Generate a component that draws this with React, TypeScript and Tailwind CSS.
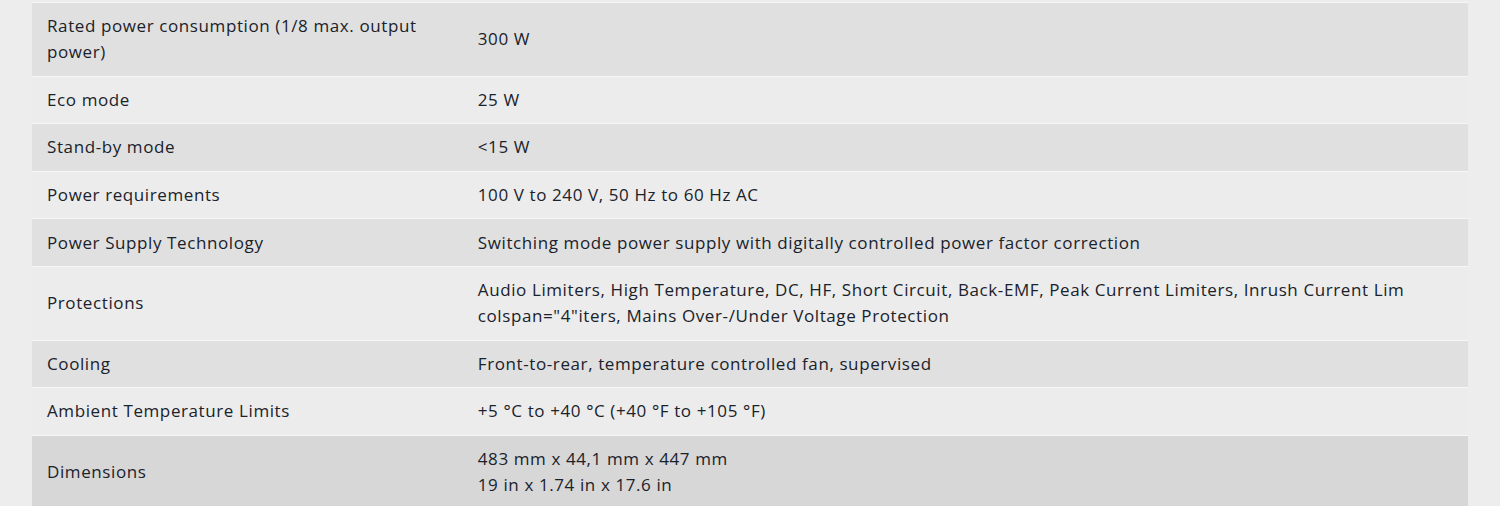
const rows: { label: string; value: React.ReactNode }[] = [
  { label: "Rated power consumption (1/8 max. output power)", value: "300 W" },
  { label: "Eco mode", value: "25 W" },
  { label: "Stand-by mode", value: "<15 W" },
  { label: "Power requirements", value: "100 V to 240 V, 50 Hz to 60 Hz AC" },
  { label: "Power Supply Technology", value: "Switching mode power supply with digitally controlled power factor correction" },
  {
    label: "Protections",
    value: 'Audio Limiters, High Temperature, DC, HF, Short Circuit, Back-EMF, Peak Current Limiters, Inrush Current Lim colspan="4"iters, Mains Over-/Under Voltage Protection',
  },
  { label: "Cooling", value: "Front-to-rear, temperature controlled fan, supervised" },
  { label: "Ambient Temperature Limits", value: "+5 °C to +40 °C (+40 °F to +105 °F)" },
  {
    label: "Dimensions",
    value: (
      <>
        483 mm x 44,1 mm x 447 mm
        <br />
        19 in x 1.74 in x 17.6 in
      </>
    ),
  },
];

export default function App() {
  return (
    <div className="min-h-[506px] bg-[#ededed] px-8 pt-[2px] font-['Open_Sans',sans-serif] text-[17px] leading-[26px] tracking-[0.6px] text-[#1a222b]">
      <table className="w-full border-collapse">
        <tbody>
          {rows.map((row, i) => (
            <tr
              key={row.label}
              className={`border-y border-[#f6f6f6] ${
                i === rows.length - 1 ? "bg-[#d7d7d7]" : i % 2 === 0 ? "bg-[#e0e0e0]" : "bg-[#ececec]"
              }`}
            >
              <td className="w-[30%] px-[15px] py-[10.3px] align-middle">{row.label}</td>
              <td className="px-[15px] py-[10.3px] align-middle">{row.value}</td>
            </tr>
          ))}
        </tbody>
      </table>
    </div>
  );
}
